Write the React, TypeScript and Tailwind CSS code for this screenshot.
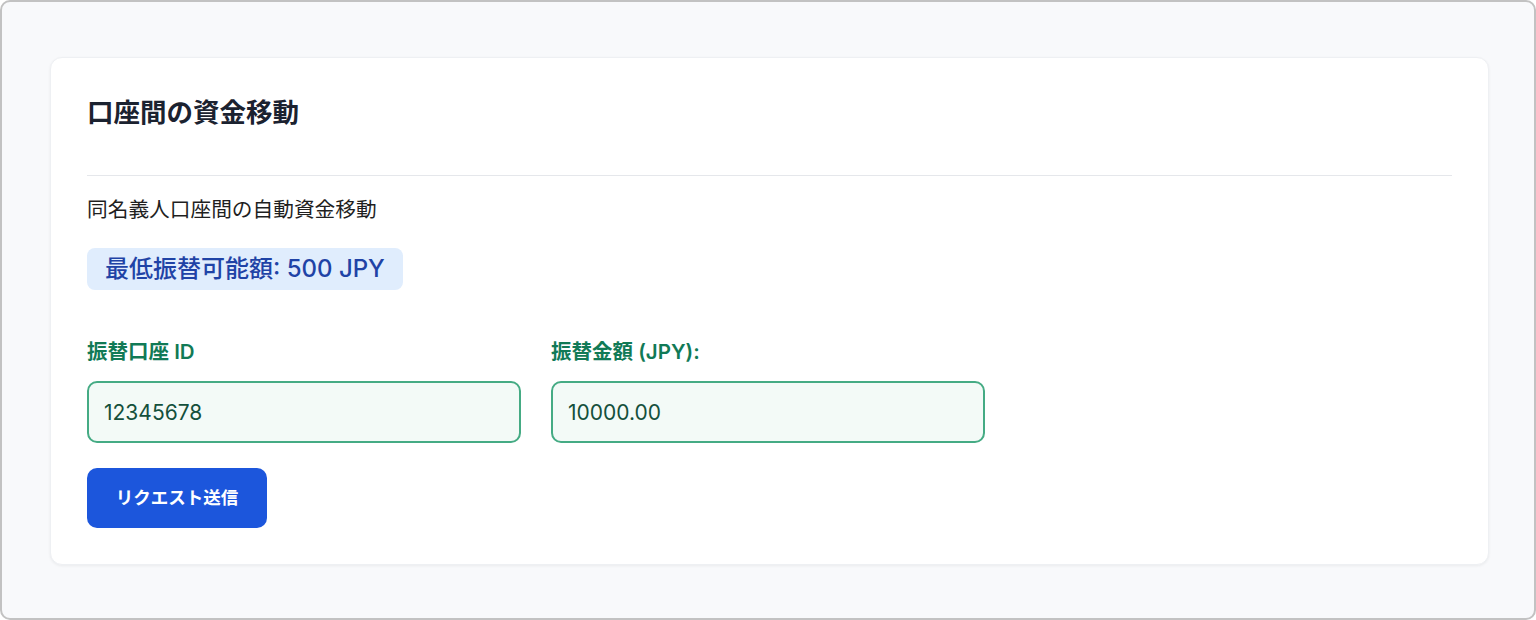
import React from 'react';

const font = { fontFamily: 'Inter, "Noto Sans CJK JP", sans-serif' };

export default function App() {
  return (
    <div
      className="h-[620px] w-full rounded-[10px] border-2 border-[#c2c2c2] bg-[#f8f9fb] pl-12 pr-[45px] pt-[55px]"
      style={font}
    >
      <div className="rounded-xl border border-[#eef0f3] bg-white p-9 shadow-[0_1px_3px_rgba(0,0,0,0.06)]">
        {/* Header */}
        <div className="border-b border-[#e5e7eb] pb-[45px]">
          <h1 className="text-[26.5px] font-bold leading-9 text-[#1b2230]">口座間の資金移動</h1>
        </div>

        <p className="mt-5 text-[20.7px] leading-7 text-[#1f1f1f]">同名義人口座間の自動資金移動</p>

        <div className="mt-6 inline-flex h-[42px] items-center rounded-lg bg-[#e0edfd] px-[18px] text-[24px] font-medium text-[#1f43a6]">
          最低振替可能額: 500 JPY
        </div>

        {/* Form */}
        <div className="mt-12 grid w-[898px] grid-cols-2 gap-[30px]">
          <div className="flex flex-col">
            <label className="mb-[15px] text-[20.5px] font-semibold leading-7 text-[#117a56]">振替口座 ID</label>
            <input
              defaultValue="12345678"
              className="h-[62px] rounded-[10px] border-2 border-[#45ab84] bg-[#f3faf7] px-[15px] text-[21px] text-[#14503c] outline-none"
            />
          </div>
          <div className="flex flex-col">
            <label className="mb-[15px] text-[20.5px] font-semibold leading-7 text-[#117a56]">振替金額 (JPY):</label>
            <input
              defaultValue="10000.00"
              className="h-[62px] rounded-[10px] border-2 border-[#45ab84] bg-[#f3faf7] px-[15px] text-[21px] text-[#14503c] outline-none"
            />
          </div>
        </div>

        <button className="mt-[25px] h-[60px] w-[180px] rounded-[10px] bg-[#1c56dc] text-[17.5px] font-semibold text-white">
          リクエスト送信
        </button>
      </div>
    </div>
  );
}
